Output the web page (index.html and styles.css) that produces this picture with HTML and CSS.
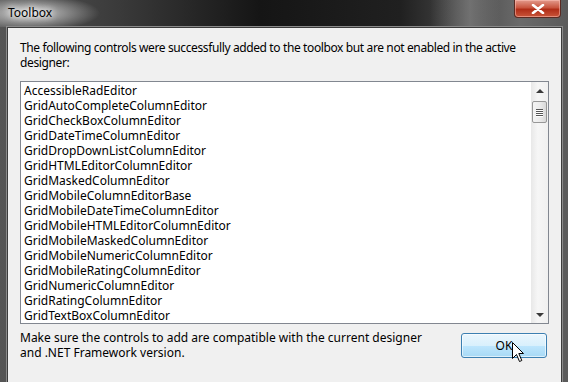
FILE: index.html
```html
<!DOCTYPE html>
<html lang="en">
<head>
  <meta charset="UTF-8" />
  <title>Toolbox</title>
  <link rel="stylesheet" href="styles.css">
</head>
<body>
  <div class="window">
    <div class="titlebar">
      <span class="title">Toolbox</span>
      <div class="close">
        <svg width="14" height="10" viewBox="0 0 14 10"><path d="M2 1 L12 9 M12 1 L2 9" stroke="#fff" stroke-width="2.6" stroke-linecap="round"/></svg>
      </div>
    </div>
    <div class="client">
      <p class="message">The following controls were successfully added to the toolbox but are not enabled in the active<br>designer:</p>
      <div class="listbox">
        <ul class="items">
          <li>AccessibleRadEditor</li>
          <li>GridAutoCompleteColumnEditor</li>
          <li>GridCheckBoxColumnEditor</li>
          <li>GridDateTimeColumnEditor</li>
          <li>GridDropDownListColumnEditor</li>
          <li>GridHTMLEditorColumnEditor</li>
          <li>GridMaskedColumnEditor</li>
          <li>GridMobileColumnEditorBase</li>
          <li>GridMobileDateTimeColumnEditor</li>
          <li>GridMobileHTMLEditorColumnEditor</li>
          <li>GridMobileMaskedColumnEditor</li>
          <li>GridMobileNumericColumnEditor</li>
          <li>GridMobileRatingColumnEditor</li>
          <li>GridNumericColumnEditor</li>
          <li>GridRatingColumnEditor</li>
          <li>GridTextBoxColumnEditor</li>
        </ul>
        <div class="scrollbar">
          <div class="arrow up"></div>
          <div class="thumb"><span></span><span></span><span></span><span></span></div>
          <div class="track"></div>
          <div class="arrow down"></div>
        </div>
      </div>
      <div class="footer">
        <p class="note">Make sure the controls to add are compatible with the current designer<br>and .NET Framework version.</p>
        <button class="ok">OK</button>
      </div>
    </div>
    <svg class="cursor" width="13" height="21" viewBox="0 0 13 21"><path d="M0.5 0.5 L0.5 16.5 L4.5 12.5 L7.5 19.5 L9.8 18.5 L6.8 11.5 L11.5 11.5 Z" fill="#fff" stroke="#000" stroke-width="1" stroke-linejoin="miter"/></svg>
  </div>
</body>
</html>
```

FILE: styles.css
```css
body { margin: 0; background: #1a1a1a; font-family: "Noto Sans", "Open Sans", sans-serif; font-size: 12px; }
.window { position: relative; width: 568px; height: 382px; overflow: hidden;
  background:
    linear-gradient(90deg, rgba(0,0,0,0) 0, rgba(0,0,0,0) 430px, rgba(150,150,150,0.5) 470px, rgba(0,0,0,0) 500px),
    linear-gradient(90deg, #555 0, #3a3a3a 120px, #151515 260px, #202020 400px, #6a6a6a 520px, #5a5a5a 568px); }
.titlebar { height: 27px; display: flex; justify-content: space-between; align-items: flex-start; padding-left: 8px;
  background: radial-gradient(ellipse 70px 18px at 30px 13px, rgba(255,255,255,0.75), rgba(255,255,255,0) 100%); }
.title { line-height: 25px; color: #000; text-shadow: 0 0 6px #fff, 0 0 8px #fff; }
.close { width: 45px; height: 17px; margin-right: 7px; display: flex; align-items: center; justify-content: center;
  border: 1px solid #5a2a22; border-top: none; border-radius: 0 0 4px 4px;
  background: linear-gradient(#e39b8d 0, #c8553f 45%, #b02d17 55%, #c9553a 100%);
  box-shadow: inset 0 0 0 1px rgba(255,200,190,0.5); }
.client { margin: 0 6px 0 7px; height: 344px; border: 1px solid #3c3c3c; background: #f0f0f0; padding: 12px 12px 0 12px;
  box-shadow: 0 0 0 1px #8a8a8a; }
.message { margin: 0; line-height: 15px; letter-spacing: -0.38px; white-space: nowrap; }
.listbox { margin-top: 11px; height: 241px; border: 1px solid #828790; background: #fff; display: flex; overflow: hidden; }
.items { list-style: none; margin: 0; padding: 1px 0 0 3px; flex: 1; line-height: 15px; overflow: hidden; }
.scrollbar { width: 17px; display: flex; flex-direction: column; background: linear-gradient(90deg, #e8e8e8, #f6f6f6 40%, #f0f0f0); }
.arrow { height: 17px; display: flex; align-items: center; justify-content: center; }
.arrow::after { content: ""; border-left: 4px solid transparent; border-right: 4px solid transparent; }
.arrow.up::after { border-bottom: 4px solid #3a3a3a; }
.arrow.down::after { border-top: 4px solid #3a3a3a; }
.thumb { height: 20px; margin: 2px 1px 0 1px; border: 1px solid #979797; border-radius: 2px;
  background: linear-gradient(90deg, #f4f4f4, #ececec 50%, #d8d8d8);
  display: flex; flex-direction: column; align-items: center; justify-content: center; gap: 1px; }
.thumb span { width: 7px; height: 1px; background: #555; box-shadow: 0 1px 0 #fff; }
.track { flex: 1; }
.footer { display: flex; justify-content: space-between; align-items: flex-start; margin-top: 6px; }
.note { margin: 0; line-height: 15px; }
.ok { width: 86px; height: 25px; margin: 3px 2px 0 0; border: 1px solid #3c7fb1; border-radius: 3px;
  background: linear-gradient(#eaf6fd 0, #d9f0fc 50%, #bee6fd 51%, #a7d9f5 100%);
  box-shadow: inset 0 0 0 1px rgba(255,255,255,0.6);
  font-family: "Noto Sans", "Open Sans", sans-serif; font-size: 12px; color: #000; padding: 0; }
.cursor { position: absolute; left: 512px; top: 342px; }
```
